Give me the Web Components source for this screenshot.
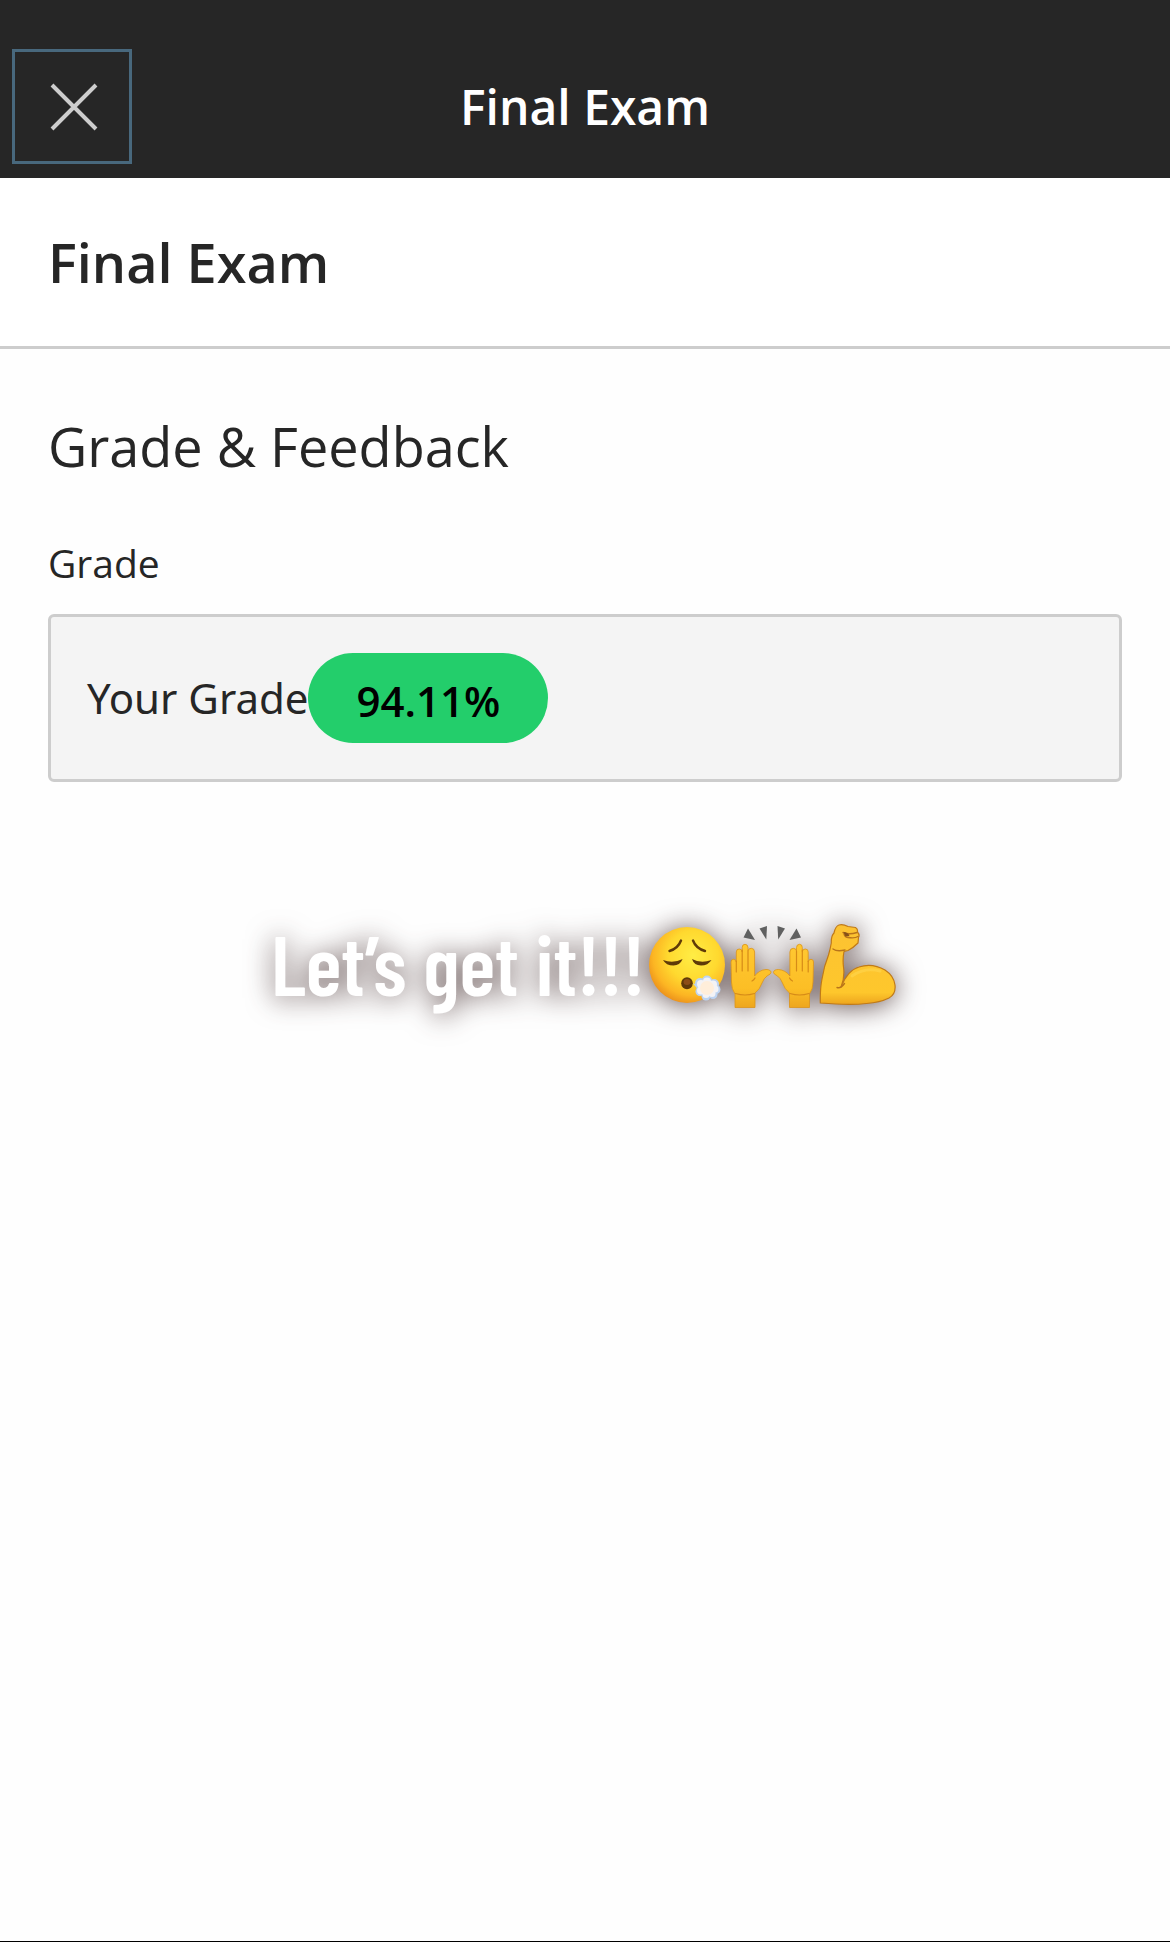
<!DOCTYPE html>
<html lang="en">
<head>
<meta charset="utf-8">
<meta name="viewport" content="width=device-width, initial-scale=1">
<title>Final Exam</title>
<style>
  html, body { margin: 0; }
  body { font-family: "Open Sans", "Noto Sans", sans-serif; color: #262626; background: #fefefe; }
</style>
</head>
<body>
<exam-page>
  <exam-topbar slot="top">Final Exam</exam-topbar>
  <exam-title slot="title">Final Exam</exam-title>
  <grade-section heading="Grade &amp; Feedback" label="Grade">
    <grade-card label="Your Grade"><grade-pill>94.11%</grade-pill></grade-card>
  </grade-section>
  <story-caption>Let’s get it!!!</story-caption>
</exam-page>

<script>
const define = (name, html, setup) => customElements.define(name, class extends HTMLElement {
  constructor() {
    super();
    this.attachShadow({ mode: "open" }).innerHTML = html;
  }
  connectedCallback() { if (setup) setup(this, this.shadowRoot); }
});

define("exam-page", `
  <style>
    :host { display: flex; flex-direction: column; min-height: 100vh; box-sizing: border-box; border-bottom: 1px solid #000; }
    main { display: flex; flex-direction: column; padding: 61px 48px; }
  </style>
  <slot name="top"></slot>
  <slot name="title"></slot>
  <main><slot></slot></main>`);

define("exam-topbar", `
  <style>
    :host { display: block; background: #262626; color: #fff; }
    header { display: grid; grid-template-columns: 120px 1fr 120px; align-items: center; padding: 49px 12px 14px; }
    button { display: flex; align-items: center; justify-content: center; width: 120px; height: 115px; padding: 0 0 0 4px; box-sizing: border-box; border: 3px solid #48687d; background: none; color: #cdcdcd; }
    svg { width: 48px; height: 48px; }
    span { text-align: center; font-size: 48px; line-height: 66px; font-weight: 600; }
  </style>
  <header>
    <button type="button" aria-label="Close">
      <svg viewBox="0 0 48 48" fill="none" stroke="currentColor" stroke-width="4" aria-hidden="true"><path d="M2 2 46 46M46 2 2 46"/></svg>
    </button>
    <span><slot></slot></span>
  </header>`);

define("exam-title", `
  <style>
    :host { display: block; background: #fff; border-bottom: 3px solid #cdcdcd; padding: 48px; }
    h1 { margin: 0; font-size: 54px; line-height: 72px; font-weight: 600; }
  </style>
  <h1><slot></slot></h1>`);

define("grade-section", `
  <style>
    :host { display: block; }
    h2 { margin: 0 0 54px; font-size: 54px; line-height: 72px; font-weight: 400; }
    h3 { margin: 0 0 24px; font-size: 39px; line-height: 54px; font-weight: 400; }
  </style>
  <section><h2></h2><h3></h3><slot></slot></section>`,
  (el, root) => {
    root.querySelector("h2").textContent = el.getAttribute("heading");
    root.querySelector("h3").textContent = el.getAttribute("label");
  });

define("grade-card", `
  <style>
    :host { display: flex; align-items: center; padding: 36px; border: 3px solid #cdcdcd; border-radius: 6px; background: #f4f4f4; font-size: 42px; line-height: 60px; }
    span { font-family: "Noto Sans", "Open Sans", sans-serif; }
  </style>
  <span></span><slot></slot>`,
  (el, root) => { root.querySelector("span").textContent = el.getAttribute("label"); });

define("grade-pill", `
  <style>
    :host { display: block; box-sizing: border-box; height: 90px; padding: 18px 48px 12px; border-radius: 45px; background: #23ce6b; color: #000; font-weight: 600; }
  </style>
  <slot></slot>`);

define("emoji-exhale", `
  <style>:host { display: block; } svg { display: block; width: 84px; height: 84px; overflow: visible; }</style>
  <svg viewBox="0 0 84 84" role="img" aria-label="Face exhaling">
    <defs>
      <radialGradient id="f" cx=".58" cy=".38" r=".66"><stop offset="0" stop-color="#ffed45"/><stop offset=".5" stop-color="#ffd92f"/><stop offset=".8" stop-color="#fcb523"/><stop offset="1" stop-color="#ea8d1a"/></radialGradient>
    </defs>
    <circle cx="42" cy="42" r="38" fill="url(#f)"/>
    <g fill="none" stroke="#5f3a08" stroke-width="2.4" stroke-linecap="round">
      <path d="M24.500 28Q33 25.500 36 17.500M48 17.500Q51 25.500 60 28"/>
    </g>
    <g fill="#5f3a08">
      <path d="M18 37Q28 41 37.600 36Q35 42.500 28.500 42.500Q21 42.500 18 37Z"/>
      <path d="M47 36Q56 41 66.500 37Q63 42.500 56 42.500Q49 42.500 47 36Z"/>
      <ellipse cx="42" cy="60.300" rx="5.800" ry="6"/>
    </g>
    <ellipse cx="42" cy="59" rx="3.500" ry="3" fill="#8b4d16"/>
    <g fill="#bdd4f2">
      <path d="M48 60.500 56 62 55 69Z"/>
      <circle cx="55" cy="60" r="5"/><circle cx="62" cy="57.500" r="5"/><circle cx="69" cy="61" r="5"/>
      <circle cx="71" cy="66.500" r="4.500"/><circle cx="68" cy="71.500" r="4.500"/><circle cx="61" cy="73" r="4.500"/><circle cx="55" cy="68.500" r="4.500"/>
    </g>
    <g fill="#f4f3f5">
      <circle cx="56" cy="61" r="4"/><circle cx="62" cy="58.500" r="4"/><circle cx="68" cy="61.500" r="4"/>
      <circle cx="70" cy="66" r="3.500"/><circle cx="67" cy="70.500" r="3.500"/><circle cx="61" cy="71.500" r="3.500"/><circle cx="56" cy="67.500" r="4"/>
    </g>
    <circle cx="62" cy="65" r="7" fill="#ffeeda"/>
  </svg>`);

define("emoji-hands", `
  <style>:host { display: block; } svg { display: block; width: 84px; height: 84px; overflow: visible; }</style>
  <svg viewBox="0 0 84 84" role="img" aria-label="Raising hands">
    <defs>
      <linearGradient id="h" x1="0" y1="0" x2="0" y2="1"><stop offset="0" stop-color="#ffc832"/><stop offset=".7" stop-color="#fcbe25"/><stop offset="1" stop-color="#eda61e"/></linearGradient>
      <g id="hand">
        <path fill="url(#h)" stroke="#dc941b" stroke-width=".8" d="M5 84.500V71Q1.500 66 1.500 59L1 39Q1 36.300 3.500 36.300T6.300 39V29Q6.300 26 9.200 26T12.200 29V24.500Q12.200 21.300 15 21.300T18 24.500V28Q18.200 25.300 21.300 25.300T24.600 29V53Q29 47 36 46.500Q41 46.500 41 49.500Q41 51 37 53Q34 55 32 60Q30 66 25 70V84.500Z"/>
        <path fill="none" stroke="#d68b18" stroke-width="1.200" stroke-linecap="round" d="M6.300 38V49M12.200 27V48M18 28V48M25 55Q24 57 22 58M5.500 70.500Q15 73.500 24.500 70.500"/>
        <g fill="#606060"><path d="M18 5.500 25 17 13.500 14.500Z"/><path d="M29.500 5.500 37 3 36.300 16.500Z"/></g>
      </g>
    </defs>
    <use href="#hand"/>
    <use href="#hand" transform="translate(84.500 0) scale(-1 1)"/>
  </svg>`);

define("emoji-muscle", `
  <style>:host { display: block; } svg { display: block; width: 84px; height: 84px; overflow: visible; }</style>
  <svg viewBox="0 0 84 84" role="img" aria-label="Flexed biceps">
    <defs>
      <linearGradient id="a" x1="0" y1="0" x2="0" y2="1"><stop offset="0" stop-color="#fcc232"/><stop offset=".85" stop-color="#fec72c"/><stop offset="1" stop-color="#eda51e"/></linearGradient>
    </defs>
    <path fill="url(#a)" stroke="#c07a18" stroke-width="1.200" stroke-linejoin="round" d="M5.300 80Q5 66 7 56Q9 43 13.500 32Q15 27 16.300 20Q16 13 19 10Q20.500 3 24 2Q28 1 33 3.500L40.500 4.500Q43 6 42.500 9Q45 12 43.500 14.500L43 20Q38 25 33 27.500L29 28.500Q27.500 36 28.500 44Q30 54 26 64Q33 47 44 44Q57 39.500 70 47Q79 53 80 62Q81 71 74 75Q65 79.500 51.500 80.500Q35 82.500 5.300 80Z"/>
    <path fill="none" stroke="#b8741a" stroke-width="1.400" stroke-linecap="round" d="M22 64.500Q25.500 66 29.500 60.500M28 9.500Q34 12 42 9.500M29 10Q29 14 33 14.500Q40 15.500 43 13.500M30 27Q22 29 18 26"/>
    <path d="M28.500 9Q33 9 34.500 13L30.500 13.500Z" fill="#85501a"/>
    <path d="M37 53Q50 44 65 48" fill="none" stroke="#ffdb5b" stroke-width="3" stroke-linecap="round" opacity=".45"/>
  </svg>`);

define("story-caption", `
  <style>
    :host { display: flex; align-items: center; justify-content: center; margin-top: 136px; color: #fff; font-family: "Barlow Condensed", "Roboto Condensed", sans-serif; font-size: 84px; font-weight: 600; line-height: 90px; white-space: nowrap; filter: drop-shadow(0 2px 14px rgba(50, 25, 25, .75)); }
    .emoji { display: flex; gap: 1px; margin-top: 4px; }
  </style>
  <span class="text"><slot></slot></span>
  <span class="emoji"><emoji-exhale></emoji-exhale><emoji-hands></emoji-hands><emoji-muscle></emoji-muscle></span>`);
</script>
</body>
</html>
